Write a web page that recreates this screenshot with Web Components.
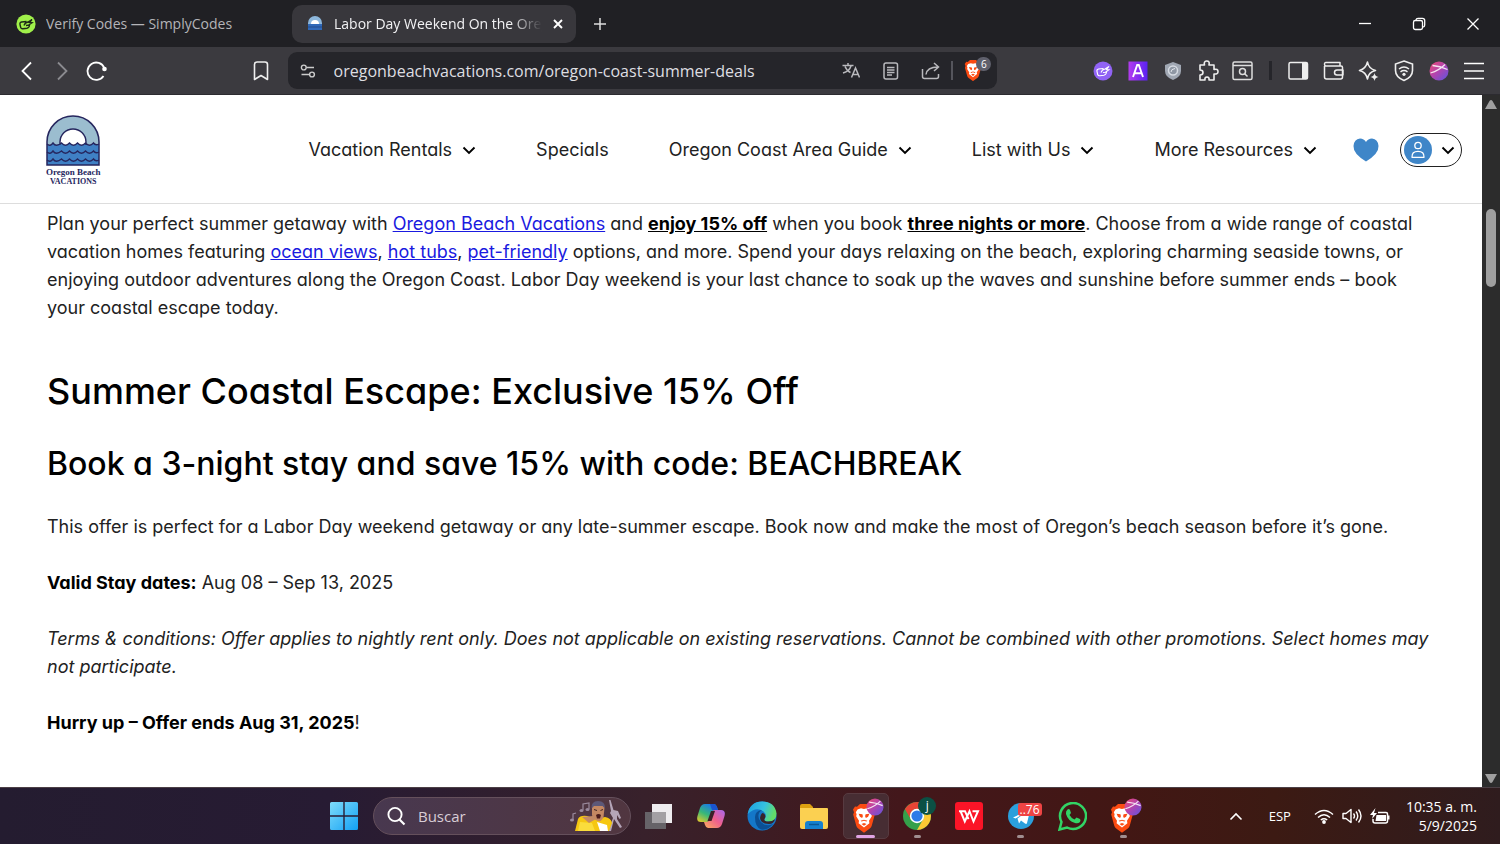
<!DOCTYPE html>
<html lang="en">
<head>
<meta charset="utf-8">
<title>Labor Day Weekend On the Oregon Coast</title>
<style>
  html, body { margin: 0; height: 100%; overflow: hidden; }
  body { font-family: "Open Sans", "Noto Sans", sans-serif; background: #202024; }
</style>
</head>
<body>
<browser-window></browser-window>

<script>
const BRAVE = `
  <path d="M5 2.500 8 0h8l3 2.500 2-.3 2 2.800-1 2.600.8 2.200-3 10.200q-.5 1.700-2 2.700l-5.800 4-5.800-4q-1.500-1-2-2.700L1.200 9.800 2 7.600 1 5l2-2.800z" fill="#fb4b12"/>
  <path d="M12 4.600 15 4l3.500 1 1.700 2.600-.8 2 .4 1.800-2.800 4.200.4 2.200-5.400 4-5.400-4 .4-2.200-2.800-4.200.4-1.800-.8-2L5.500 5 9 4z" fill="#fff"/>
  <path d="M6.600 9l3.800.6.5 1.800-.8 1.600-2.200-1.200zM17.400 9l-3.800.6-.5 1.800.8 1.600 2.200-1.200zM8.600 15.600l3.400-1.100 3.400 1.100-1 .7-2.400-.8-2.400.8zM9.500 18.500l2.500-1 2.500 1-2.500 1.700z" fill="#fb4b12"/>`;
const BALL = `
  <defs><linearGradient id="ball" x1="0" y1="0" x2="1" y2="1"><stop offset="0" stop-color="#f04a72"/><stop offset=".5" stop-color="#b044b0"/><stop offset="1" stop-color="#5b55e0"/></linearGradient></defs>
  <circle cx="10" cy="10" r="9.500" fill="url(#ball)"/>
  <path d="M3.500 4.500Q11 5 18.500 8.500M1.500 12Q10 9.500 16 3.500" fill="none" stroke="#fff" stroke-opacity=".85" stroke-width="1.300"/>`;
const ARCH = `
  <path d="M1 50V27a26 26 0 0 1 52 0v23z" fill="#9bbdcf"/>
  <path d="M14 31v-4a13 13 0 0 1 26 0v4z" fill="#fff"/>
  <path d="M1 29q3 3 6-1 3 4.500 8.500 0 4 4.500 8 0 4 4.500 8 0 4 4.500 8 0 4 4.500 8 0 2 3 5.500 1V50H1z" fill="#3f80c4"/>
  <path d="M14 30v-3a13 13 0 0 1 26 0v3M1 29q3 3 6-1 3 4.500 8.500 0 4 4.500 8 0 4 4.500 8 0 4 4.500 8 0 4 4.500 8 0 2 3 5.500 1M1 37q3 3 6-1 3 4.500 8.500 0 4 4.500 8 0 4 4.500 8 0 4 4.500 8 0 4 4.500 8 0 2 3 5.500 1M1 45q3 3 6-1 3 4.500 8.500 0 4 4.500 8 0 4 4.500 8 0 4 4.500 8 0 4 4.500 8 0 2 3 5.500 1" fill="none" stroke="#26265e" stroke-width="1.400"/>
  <path d="M1 50V27a26 26 0 0 1 52 0v23z" fill="none" stroke="#26265e" stroke-width="1.500"/>`;
const HAND = 'M10.500 7.500L5.500 8q-2 .5-1.500 2.500l.7 3q.5 1.500 2.300 1.200l4-.5q1.800-.4 2.300-2L13.500 11M8 11.500q1-3 4-3.500l4-2.500-2.500 3 2.500.2-3.500 2.500-2.500.3';

// name: [width, height, markup]; the view box is the drawn size
const ICONS = {
  simply: [20, 20, `<circle cx="10" cy="10" r="9.600" fill="#a0f04a"/><path d="${HAND}" fill="none" stroke="#1d2a17" stroke-width="1.400"/>`],
  simply2: [20, 20, `<circle cx="10" cy="10" r="9.500" fill="#9163f5"/><path d="${HAND}" fill="none" stroke="#fff" stroke-width="1.100"/>`],
  arch: [54, 51, ARCH],
  favicon: [14, 15, '<path d="M0 14V7a7 7 0 0 1 14 0v7z" fill="#8db7dc"/><path d="M3 8a4 4 0 0 1 8 0z" fill="#fff"/><path d="M0 8h14v6H0z" fill="#2f68b8"/><path d="M0 11h14" stroke="#234a8c"/>'],
  x: [12, 12, '<path d="M2 2l8 8M10 2l-8 8" stroke="#fff" stroke-width="1.900"/>'],
  plus: [14, 14, '<path d="M7 1v12M1 7h12" stroke="#ddd" stroke-width="1.500"/>'],
  min: [14, 14, '<path d="M1 6.500h12" stroke="#fff" stroke-width="1.300"/>'],
  restore: [14, 14, '<rect x="1.500" y="3.500" width="9" height="9" rx="1.800" fill="none" stroke="#fff" stroke-width="1.300"/><path d="M4 3q.2-1.700 2-1.700h4.500q2.200 0 2.200 2.200V8q0 1.600-1.500 2" fill="none" stroke="#fff" stroke-width="1.300"/>'],
  close: [14, 14, '<path d="M1.500 1.500l11 11M12.500 1.500l-11 11" stroke="#fff" stroke-width="1.300"/>'],
  back: [12, 20, '<path d="M10 1.500L1.500 10l8.500 8.500" fill="none" stroke="#fff" stroke-width="1.800"/>'],
  forward: [12, 20, '<path d="M2 1.500l8.500 8.500L2 18.500" fill="none" stroke="#8b8b90" stroke-width="1.800"/>'],
  reload: [22, 20, '<path d="M18.300 7A8.700 8.700 0 1 0 17.500 15" fill="none" stroke="#fff" stroke-width="1.800"/><circle cx="18.500" cy="8" r="2.300" fill="#fff"/>'],
  bookmark: [16, 20, '<path d="M1.500 18.500V3.500q0-2.500 2.500-2.500h8q2.500 0 2.500 2.500v15L8 14.500z" fill="none" stroke="#eee" stroke-width="1.600" stroke-linejoin="round"/>'],
  tune: [16, 16, '<path d="M6.500 4.500H14M1.500 11.500h8" stroke="#ccc" stroke-width="1.400"/><circle cx="3.800" cy="4.500" r="2.400" fill="none" stroke="#ccc" stroke-width="1.400"/><circle cx="12" cy="11.500" r="2.400" fill="none" stroke="#ccc" stroke-width="1.400"/>'],
  translate: [18, 17, '<path d="M.5 3.500h11M6 1v2.500M9 4Q7.500 9 1 11M3 4.500Q5 9 8.500 10.500M9.500 15.500l4-9.500 4 9.500M11 12.500h5" fill="none" stroke="#b9b9bd" stroke-width="1.500"/>'],
  reader: [16, 18, '<rect x="1" y="1" width="13.500" height="16" rx="2" fill="none" stroke="#b9b9bd" stroke-width="1.500"/><path d="M4 5.500h7.500M4 8h7.500M4 10.500h7.500M4 13h5" stroke="#b9b9bd" stroke-width="1.300"/>'],
  share: [20, 18, '<path d="M1.500 7v7.500q0 2 2 2h12q2 0 2-2V12M5 12.500Q6 5 17 5M13 1l4.500 4-4.500 4" fill="none" stroke="#b9b9bd" stroke-width="1.500"/>'],
  brave: [18, 21, `<g transform="scale(.75 .79)">${BRAVE}</g>`],
  letter: [20, 20, '<defs><linearGradient id="g"><stop stop-color="#b33cf0"/><stop offset="1" stop-color="#5a22f0"/></linearGradient></defs><path d="M.5.500h19v19H.5z" fill="url(#g)"/><path d="M5 16l4.200-12h1.600L15 16M6.500 12.200h7" fill="none" stroke="#fff" stroke-width="1.900"/>'],
  shield: [16, 18, '<path d="M8 0l8 3v6q0 6-8 9-8-3-8-9V3z" fill="#a0a7b3"/><circle cx="8" cy="8.500" r="4.500" fill="#8f97a4" stroke="#d6dbe3" stroke-width="1.500"/><path d="M6 10q0-3 4-3.500" fill="none" stroke="#e4e8ee"/>'],
  puzzle: [22, 22, '<path d="M3 5h4.500q-1-3.500 2-4 3.500-.2 2.500 4H17v4.500q4-1 4 2t-4 2.500V20h-5q.5-3-2-3t-2 3H3v-5q3 0 3-2.500T3 10z" fill="none" stroke="#eee" stroke-width="1.600" stroke-linejoin="round"/>'],
  find: [22, 20, '<rect x="1" y="1" width="19" height="17.500" rx="1.500" fill="none" stroke="#ddd" stroke-width="1.500"/><path d="M1 4.500h19M12.500 12.500l3 3" stroke="#ddd" stroke-width="1.500"/><circle cx="10.500" cy="10.500" r="3" fill="none" stroke="#ddd" stroke-width="1.500"/>'],
  sidebar: [21, 20, '<rect x="1" y="1.500" width="18.500" height="16.500" rx="1.500" fill="none" stroke="#eee" stroke-width="1.500"/><path d="M14 2h5.500v16H14z" fill="#eee"/>'],
  wallet: [22, 20, '<path d="M1.500 5v11q0 2 2 2h14q2 0 2-2V6.500q0-1.500-1.500-1.500H3q-1.500 0-1.500-1.800T3 1.500h14V5M20 9h-6q-2.500 0-2.500 2.500T14 14h6z" fill="none" stroke="#eee" stroke-width="1.500" stroke-linejoin="round"/>'],
  spark: [22, 22, '<path d="M9.500 2q1 6.500 8 8.500-7 1.500-8 8.500-1.500-7-8-8.500 6.500-2 8-8.500z" fill="none" stroke="#eee" stroke-width="1.600" stroke-linejoin="round"/><path d="M16.500 13q.5 3.500 4 4-3.500.5-4 4-.5-3.500-4-4 3.500-.5 4-4z" fill="#eee"/>'],
  vpn: [20, 22, '<path d="M10 1l8.500 3v6.500q0 6.500-8.500 10-8.500-3.500-8.500-10V4z" fill="none" stroke="#eee" stroke-width="1.600"/><path d="M5 9q5-4 10 0M6.500 11.800q3.500-2.500 7 0" fill="none" stroke="#eee" stroke-width="1.500"/><circle cx="10" cy="14.300" r="1.600" fill="#eee"/>'],
  ball: [20, 20, BALL],
  menu: [20, 18, '<path d="M0 1.500h20M0 9h20M0 16.500h20" stroke="#fff" stroke-width="1.600"/>'],
  chevron: [14, 9, '<path d="M1.500 1.500L7 7l5.500-5.500" fill="none" stroke="#000" stroke-width="1.900"/>'],
  heart: [26, 24, '<path d="M13 23.500Q0 15.500.5 8 1 1 7 .5q4 0 6 3.500Q15 .5 19 .5q6 .5 6.500 7.500.5 7.500-12.500 15.500z" fill="#3f86c8"/>'],
  person: [28, 28, '<circle cx="14" cy="14" r="14" fill="#3f86c8"/><circle cx="14" cy="9.500" r="3.200" fill="none" stroke="#fff" stroke-width="1.300"/><path d="M8 21.300q-.3-6 6-6t6 6z" fill="none" stroke="#fff" stroke-width="1.300" stroke-linejoin="round"/>'],
  up: [12, 9, '<path d="M0 9l4.500-8q1.500-2 3 0L12 9z" fill="#a0a0a0"/>'],
  down: [12, 9, '<path d="M0 0l4.500 8q1.500 2 3 0L12 0z" fill="#a0a0a0"/>'],
  start: [28, 28, '<defs><linearGradient id="g" x1="0" y1="0" x2="1" y2="1"><stop stop-color="#7fdcfb"/><stop offset="1" stop-color="#12a0f4"/></linearGradient></defs><path d="M1.500 0H13.300v13.300H0V1.500Q0 0 1.500 0zM14.700 0H26.500Q28 0 28 1.500V13.300H14.700zM0 14.700h13.300V28H1.500Q0 28 0 26.500zM14.700 14.700H28v11.800Q28 28 26.500 28H14.700z" fill="url(#g)"/>'],
  search: [20, 20, '<circle cx="9" cy="8.500" r="6.600" fill="none" stroke="#fff" stroke-width="1.900"/><path d="M13.500 13.500l5 5" stroke="#fff" stroke-width="2.200"/>'],
  singer: [54, 32, '<path d="M4 20v-6l3-1M14 10V4l6-1v6" fill="none" stroke="#9a8a9d" stroke-width="1.200"/><ellipse cx="3" cy="20" rx="2" ry="1.500" fill="#9a8a9d"/><ellipse cx="12.500" cy="10.500" rx="2" ry="1.500" fill="#9a8a9d"/><ellipse cx="18.500" cy="9.500" rx="2" ry="1.500" fill="#9a8a9d"/><path d="M39 31l5-13-3-5 1-2-2-11h1.500l3 10 4.500 1 3 7-1.500 1-2.500-4v4l5 8-2 1-6-9-3 12z" fill="#b5a5b8"/><path d="M6 31l3-12q2-4 9-3l8 3 10-2q6 1 7 6l-3 8z" fill="#f6c712"/><path d="M11 22l12 1 3 8H9z" fill="#fbdd3c"/><path d="M28 22l3 9h8l-1-6z" fill="#fff"/><path d="M23 8q0-6 6-6t6.500 6l-1 9q-2 5-5.500 4-5-2-6-6z" fill="#c48862"/><path d="M22.500 8.500Q22 1 29 1q7.500 0 7 7.500l-2.500-2.500H25z" fill="#5c5878"/><path d="M27 15q2.500-2 5 0l-1 3.500h-3z" fill="#4c1d1c"/><path d="M25 9.500l3 1M31.500 10.500l2.500-1" stroke="#402522"/><path d="M13 17l11-1 3 3-7 4z" fill="#c28a66"/>'],
  taskview: [29, 27, '<path d="M1 9h21v17H1z" fill="#666368"/><path d="M8 1h20v19H8z" fill="#eeecef"/><path d="M8 9h14v11H8z" fill="#a3a0a4"/>'],
  copilot: [28, 26, '<defs><linearGradient id="a" x1="0" y1="1" x2=".6" y2="0"><stop stop-color="#f3cc25"/><stop offset=".5" stop-color="#38b878"/><stop offset="1" stop-color="#1978e8"/></linearGradient><linearGradient id="b" x1="1" y1="0" x2="0" y2="1"><stop stop-color="#a668f0"/><stop offset=".5" stop-color="#f0608c"/><stop offset="1" stop-color="#fbb05c"/></linearGradient></defs><path d="M8 1h9q2 0 3 3l1 3h-3q-2 0-3 3l-2 7q-1 2-3 2H4q-5 0-3.500-6L3 5q1.500-4 5-4z" fill="url(#a)"/><path d="M20 25h-9q-2 0-3-3l-1-3h3q2 0 3-3l2-7q1-2 3-2h6q5 0 3.500 6L25 21q-1.500 4-5 4z" fill="url(#b)"/><path d="M14 8l-3.500 10h4L18 8z" fill="#3a2028"/><path d="M13 1h4q2 0 3 3l1 3h-6z" fill="#1954cf"/>'],
  edge: [30, 30, '<defs><linearGradient id="a" x1="0" y1="0" x2="1" y2=".3"><stop stop-color="#1c9fe0"/><stop offset=".6" stop-color="#35c1e0"/><stop offset="1" stop-color="#62dd6a"/></linearGradient></defs><circle cx="15" cy="15" r="14.500" fill="#1477c9"/><path d="M.7 13Q3 .5 15 .5q13 0 14.500 12 0 8-8 8-5 0-4-2.500 3-4-1-7.500Q9 5 .7 13z" fill="url(#a)"/><path d="M17.500 18q-1 2.500 4 2.500 4 0 6.500-2.500-1 5-6 5-8 0-9-6 1-5 3-5 4 2 1.500 6z" fill="#38242a"/><path d="M8 16q0-6 7-7-5 3-3 9 3 7 11 6l3-1q-5 6.500-12 5.500Q8 26 8 16z" fill="#0b4f94"/>'],
  folder: [30, 28, '<path d="M1 4q0-2 2-2h8l3 3v6H1z" fill="#dca010"/><path d="M1 6h27q1 0 1 1v18q0 2-2 2H3q-2 0-2-2z" fill="#fbd051"/><path d="M6 27v-5q0-3 3-3h12q3 0 3 3v5z" fill="#1581d0"/><path d="M10 22.500h10" stroke="#0b5896" stroke-width="1.500"/>'],
  braveapp: [36, 38, `<g transform="translate(4 7) scale(1 1.080)">${BRAVE}</g><g transform="translate(18 1) scale(.9)">${BALL}</g>`],
  chrome: [28, 28, '<circle cx="14" cy="14" r="14" fill="#34a04a"/><path d="M1.900 7A14 14 0 0 1 26.100 7H14a7 7 0 0 0-6.100 10.500z" fill="#e64435"/><path d="M26.100 7A14 14 0 0 1 14 28l6-10.500A7 7 0 0 0 20 10z" fill="#fcc934"/><circle cx="14" cy="14" r="7.200" fill="#fff"/><circle cx="14" cy="14" r="5.600" fill="#2c7be8"/>'],
  wps: [28, 28, '<rect width="28" height="28" rx="3" fill="#fb1427"/><path d="M4 9.200h6l3.500 8M5.500 9.200L9.800 19.500 14.500 9.200 18.500 19.500 23 9.200h-5.500" fill="none" stroke="#fff" stroke-width="2"/>'],
  telegram: [26, 26, '<circle cx="13" cy="13" r="13" fill="#2b9fdc"/><path d="M5 14.500L21 7q1 0 1 1l-3 12q-.5 1.500-2 .5l-4-3-2 3-1.500-5 8-6-10 6z" fill="#fff"/>'],
  whatsapp: [29, 29, '<path d="M1.500 27.500l2-7.500A13 13 0 1 1 9 25.500z" fill="none" stroke="#32d465" stroke-width="2.500"/><path d="M9.500 7.500q1.500-1 2.500.5l1 3-1.500 2q2 3.500 5 4.500l2-2 3.500 1.500q1 1 0 3-2 2-5 1-7-2-9-9-.5-3 1.500-4.500z" fill="#32d465"/>'],
  caret: [14, 9, '<path d="M1.500 7.500L7 2l5.500 5.500" fill="none" stroke="#fff" stroke-width="1.600"/>'],
  wifi: [20, 15, '<path d="M1 5.500q9-8 18 0M4 8.500q6-5.500 12 0M6.800 11q3.200-2.500 6.400 0" fill="none" stroke="#fff" stroke-width="1.500"/><circle cx="10" cy="13" r="1.900" fill="#fff"/>'],
  volume: [20, 16, '<path d="M1 5.500h3L9 1.500v13l-5-4H1zM11.500 5.500q2 2.500 0 5M14 3.500q3.500 4.500 0 9M16.500 1.500q5 6.500 0 13" fill="none" stroke="#fff" stroke-width="1.400" stroke-linejoin="round"/>'],
  battery: [21, 17, '<path d="M8 4.500h8q1.500 0 1.500 1.500v7q0 2-2 2H5q-2 0-2-2v-2" fill="none" stroke="#fff" stroke-width="1.500"/><path d="M6.500 7H16v6H5.500zM17.500 7.500h2v4h-2zM5.500 0L0 7h3l-1 4 5-6H4z" fill="#fff"/>'],
};

class UiIcon extends HTMLElement {
  connectedCallback() {
    const [w, h, markup] = ICONS[this.getAttribute('name')];
    this.attachShadow({mode: 'open'}).innerHTML = `
      <style>:host { display: inline-flex; flex: none; } svg { display: block; }</style>
      <svg width="${w}" height="${h}" viewBox="0 0 ${w} ${h}" aria-hidden="true">${markup}</svg>`;
  }
}

function icon(name) {
  return `<ui-icon name="${name}"></ui-icon>`;
}

function button(name, label) {
  return `<button type="button" aria-label="${label}">${icon(name)}</button>`;
}

const RESET = `
  * { box-sizing: border-box; }
  button { display: flex; align-items: center; justify-content: center; flex: none; padding: 0; border: 0; background: none; color: inherit; font: inherit; }
  input { min-width: 0; padding: 0; border: 0; outline: 0; background: none; color: inherit; font: inherit; }
`;

// Base class: subclasses only give their styles and markup
class Part extends HTMLElement {
  constructor() {
    super();
    this.attachShadow({mode: 'open'}).innerHTML = `<style>${RESET}:host { box-sizing: border-box; }${this.css()}</style>${this.html()}`;
  }
}

class TabStrip extends Part {
  css() {
    return `
      :host { display: flex; align-items: center; height: 47px; flex: none; background: #202024; color: #b4b4b8; font-size: 14px; line-height: 20px; }
      .tab { display: flex; align-items: center; gap: 10px; width: 284px; height: 38px; padding: 0 12px 0 16px; border-radius: 10px; }
      .tab + .tab { margin-left: 8px; background: #38373c; color: #f2f2f4; }
      .title { flex: 1; overflow: hidden; white-space: nowrap; }
      .active .title { margin-left: 2px; -webkit-mask-image: linear-gradient(90deg, #000 85%, transparent); mask-image: linear-gradient(90deg, #000 85%, transparent); }
      .new { width: 48px; height: 38px; }
      .window { display: flex; margin-left: auto; }
      .window button { width: 54px; height: 47px; }
    `;
  }
  html() {
    return `
      <div class="tab">${icon('simply')}<span class="title">Verify Codes — SimplyCodes</span></div>
      <div class="tab active">${icon('favicon')}<span class="title">Labor Day Weekend On the Oreg</span>${button('x', 'Close tab')}</div>
      <button type="button" class="new" aria-label="New tab">${icon('plus')}</button>
      <div class="window">${button('min', 'Minimize')}${button('restore', 'Restore')}${button('close', 'Close')}</div>
    `;
  }
}

class ToolBar extends Part {
  css() {
    return `
      :host { display: flex; align-items: center; height: 48px; padding: 0 9px; flex: none; background: #3b3a3f; border-bottom: 1px solid #2c2b30; color: #dedee1; }
      button { width: 35px; height: 35px; }
      .left { flex: 130; }
      .right { flex: 88; }
      .address { display: flex; align-items: center; flex: 708; height: 37px; margin-left: 9px; padding-right: 4px; border-radius: 9px; background: #25252a; }
      .address button { width: 40px; }
      input { flex: 1; margin-left: 6px; font-size: 16px; line-height: 24px; }
      .rule { width: 2px; height: 19px; background: #55555c; }
      .split { width: 3px; height: 19px; margin: 0 9px; background: #25252a; }
      .shields { position: relative; }
      .count { position: absolute; top: 4px; right: 2px; width: 15px; border-radius: 7px; background: #5f606c; color: #fff; font-size: 10px; line-height: 14px; text-align: center; }
    `;
  }
  html() {
    return `
      ${button('back', 'Back')}${button('forward', 'Forward')}${button('reload', 'Reload')}
      <span class="left"></span>
      ${button('bookmark', 'Bookmark this page')}
      <div class="address">
        ${button('tune', 'Site information')}
        <input type="text" aria-label="Address" value="oregonbeachvacations.com/oregon-coast-summer-deals">
        ${button('translate', 'Translate')}${button('reader', 'Reader mode')}${button('share', 'Share')}
        <span class="rule"></span>
        <button type="button" class="shields" aria-label="Shields">${icon('brave')}<span class="count">6</span></button>
      </div>
      <span class="right"></span>
      ${button('simply2', 'SimplyCodes')}${button('letter', 'A')}${button('shield', 'Privacy')}${button('puzzle', 'Extensions')}${button('find', 'Search page')}
      <span class="split"></span>
      ${button('sidebar', 'Sidebar')}${button('wallet', 'Wallet')}${button('spark', 'Assistant')}${button('vpn', 'VPN')}${button('ball', 'Profile')}${button('menu', 'Menu')}
    `;
  }
}

class NavItem extends Part {
  css() {
    return `
      :host { display: flex; align-items: center; gap: 10px; }
      a { color: #222; text-decoration: none; white-space: nowrap; }
      ui-icon { display: none; }
      :host([menu]) ui-icon { display: inline-flex; }
    `;
  }
  html() {
    return `<a href="#"><slot></slot></a>${icon('chevron')}`;
  }
}

class SiteHeader extends Part {
  css() {
    return `
      :host { display: flex; align-items: center; height: 109px; padding: 2px 20px 0 46px; flex: none; border-bottom: 1px solid #ddd; font-size: 18px; line-height: 28px; }
      .logo { display: flex; flex-direction: column; align-items: center; color: #26265e; font: bold 9px/9px "Liberation Serif", serif; text-decoration: none; white-space: nowrap; }
      .logo span { margin-top: 2px; }
      .logo small { font-size: 8px; }
      nav { display: flex; gap: 60px; margin-left: auto; }
      .heart { margin: 0 21px 0 36px; }
      .account { gap: 9px; width: 62px; height: 34px; padding-right: 4px; border: 1px solid #222; border-radius: 17px; }
    `;
  }
  html() {
    return `
      <a class="logo" href="#">${icon('arch')}<span>Oregon Beach</span><small>VACATIONS</small></a>
      <nav>
        <nav-item menu>Vacation Rentals</nav-item>
        <nav-item>Specials</nav-item>
        <nav-item menu>Oregon Coast Area Guide</nav-item>
        <nav-item menu>List with Us</nav-item>
        <nav-item menu>More Resources</nav-item>
      </nav>
      <button type="button" class="heart" aria-label="Favorites">${icon('heart')}</button>
      <button type="button" class="account" aria-label="Account">${icon('person')}${icon('chevron')}</button>
    `;
  }
}

class OfferArticle extends Part {
  css() {
    return `
      :host { display: block; padding: 6px 46px 0 47px; color: #222; font-size: 18px; line-height: 28px; }
      p { margin: 0 0 28px; }
      h1, h2 { margin: 0 0 28px; color: #000; font-weight: 500; }
      h1 { margin-top: 45px; font-size: 36px; line-height: 48px; }
      h2 { font-size: 32px; line-height: 42px; }
      a { color: #1a1ae0; }
      b { color: #000; font-weight: 700; }
    `;
  }
  html() {
    return `
      <p>Plan your perfect summer getaway with <a href="#">Oregon Beach Vacations</a> and <b><u>enjoy 15% off</u></b> when you book <b><u>three nights or more</u></b>. Choose from a wide range of coastal vacation homes featuring <a href="#">ocean views</a>, <a href="#">hot tubs</a>, <a href="#">pet-friendly</a> options, and more. Spend your days relaxing on the beach, exploring charming seaside towns, or enjoying outdoor adventures along the Oregon Coast. Labor Day weekend is your last chance to soak up the waves and sunshine before summer ends – book your coastal escape today.</p>
      <h1>Summer Coastal Escape: Exclusive 15% Off</h1>
      <h2>Book a 3-night stay and save 15% with code: BEACHBREAK</h2>
      <p>This offer is perfect for a Labor Day weekend getaway or any late-summer escape. Book now and make the most of Oregon’s beach season before it’s gone.</p>
      <p><b>Valid Stay dates:</b> Aug 08 – Sep 13, 2025</p>
      <p><em>Terms &amp; conditions: Offer applies to nightly rent only. Does not applicable on existing reservations. Cannot be combined with other promotions. Select homes may not participate.</em></p>
      <p><b>Hurry up – Offer ends Aug 31, 2025</b>!</p>
    `;
  }
}

class ScrollRail extends Part {
  css() {
    return `
      :host { display: flex; flex-direction: column; align-items: center; width: 18px; flex: none; background: #2c2c2c; }
      button { width: 18px; height: 18px; }
      .track { flex: 1; padding-top: 96px; }
      .thumb { width: 10px; height: 78px; border-radius: 5px; background: #9f9f9f; }
    `;
  }
  html() {
    return `${button('up', 'Scroll up')}<div class="track"><div class="thumb"></div></div>${button('down', 'Scroll down')}`;
  }
}

class TaskApp extends Part {
  css() {
    return `
      :host { position: relative; display: flex; width: 46px; height: 46px; border: 1px solid transparent; border-radius: 5px; }
      :host([current]) { border-color: #573a40; background: #472d33; }
      button { width: 100%; height: 100%; }
      .bar { position: absolute; left: 0; right: 0; bottom: 0; width: 7px; height: 3px; margin: auto; border-radius: 2px; background: #a08e90; display: none; }
      :host([running]) .bar { display: block; }
      :host([current]) .bar { width: 19px; background: #e0a4e4; }
      ::slotted(*) { position: absolute; top: 3px; right: 3px; min-width: 18px; border-radius: 9px; background: #0b5044; color: #fff; font-size: 12px; line-height: 18px; text-align: center; }
      ::slotted(.red) { top: 9px; right: 1px; padding: 0 2px; border-radius: 3px; background: #ee4444; line-height: 13px; }
    `;
  }
  html() {
    return '<button type="button"></button><slot></slot><span class="bar"></span>';
  }
  connectedCallback() {
    const btn = this.shadowRoot.querySelector('button');
    btn.setAttribute('aria-label', this.getAttribute('icon'));
    btn.innerHTML = icon(this.getAttribute('icon'));
  }
}

class TaskBar extends Part {
  css() {
    return `
      :host { display: grid; grid-template-columns: 10fr auto 11fr; align-items: center; height: 57px; flex: none; color: #fff; border-top: 1px solid #4c4046; background: linear-gradient(90deg, #241c30 0%, #271b33 22%, #38212b 43%, #43171b 60%, #421714 75%, #3c1a13 85%, #2f1c1e 100%); }
      .apps { display: flex; grid-column: 2; align-items: center; }
      .search { display: flex; align-items: center; gap: 12px; width: 258px; height: 38px; margin: 0 5px 0 6px; padding: 0 7px 0 12px; border: 1px solid #65505c; border-radius: 19px; background: linear-gradient(90deg, #48384f, #513640); }
      .search input { flex: 1; font-size: 15px; line-height: 22px; }
      .search input::placeholder { color: #d8cdd6; opacity: 1; }
      .pinned { display: flex; justify-content: space-between; width: 511px; }
      .tray { display: flex; align-items: center; justify-content: flex-end; padding-right: 23px; font-size: 13px; line-height: 19px; }
      .tray > span { margin: 0 23px 0 26px; }
      .icons { gap: 8px; }
      .clock { margin-left: 15px; font-size: 14px; text-align: right; white-space: nowrap; }
    `;
  }
  html() {
    return `
      <div class="apps">
        <task-app icon="start"></task-app>
        <label class="search">${icon('search')}<input type="text" placeholder="Buscar" aria-label="Buscar">${icon('singer')}</label>
        <div class="pinned">
          <task-app icon="taskview"></task-app>
          <task-app icon="copilot"></task-app>
          <task-app icon="edge"></task-app>
          <task-app icon="folder"></task-app>
          <task-app icon="braveapp" current running></task-app>
          <task-app icon="chrome" running><span>j</span></task-app>
          <task-app icon="wps"></task-app>
          <task-app icon="telegram" running><span class="red">..76</span></task-app>
          <task-app icon="whatsapp"></task-app>
          <task-app icon="braveapp" running></task-app>
        </div>
      </div>
      <div class="tray">
        ${button('caret', 'Hidden icons')}
        <span>ESP</span>
        <button type="button" class="icons" aria-label="Network, volume and battery">${icon('wifi')}${icon('volume')}${icon('battery')}</button>
        <div class="clock">10:35 a. m.<br>5/9/2025</div>
      </div>
    `;
  }
}

class BrowserWindow extends Part {
  css() {
    return `
      :host { display: flex; flex-direction: column; height: 100vh; }
      .view { display: flex; flex: 1; min-height: 0; background: #fff; }
      .page { flex: 1; min-width: 0; overflow: hidden; font-family: Inter, "Noto Sans", sans-serif; font-feature-settings: "cv11"; }
    `;
  }
  html() {
    return `
      <tab-strip></tab-strip>
      <tool-bar></tool-bar>
      <div class="view">
        <div class="page"><site-header></site-header><offer-article></offer-article></div>
        <scroll-rail></scroll-rail>
      </div>
      <task-bar></task-bar>
    `;
  }
}

customElements.define('ui-icon', UiIcon);
customElements.define('tab-strip', TabStrip);
customElements.define('tool-bar', ToolBar);
customElements.define('nav-item', NavItem);
customElements.define('site-header', SiteHeader);
customElements.define('offer-article', OfferArticle);
customElements.define('scroll-rail', ScrollRail);
customElements.define('task-app', TaskApp);
customElements.define('task-bar', TaskBar);
customElements.define('browser-window', BrowserWindow);
</script>
</body>
</html>
